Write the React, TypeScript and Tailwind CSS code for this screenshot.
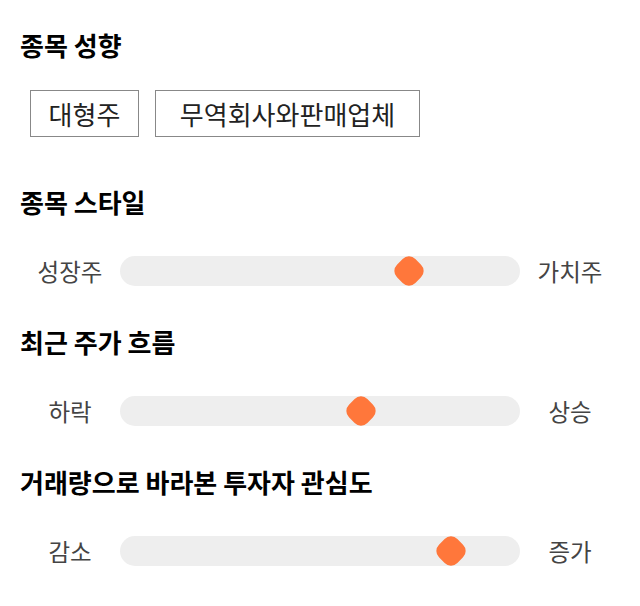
import React from 'react';

interface SliderProps {
  left: string;
  right: string;
  value: number;
}

const traits = [
  { label: '대형주', width: 'w-[109px]' },
  { label: '무역회사와판매업체', width: 'w-[265px]' },
];

const sliders: { title: string; left: string; right: string; value: number }[] = [
  { title: '종목 스타일', left: '성장주', right: '가치주', value: 72.25 },
  { title: '최근 주가 흐름', left: '하락', right: '상승', value: 60.25 },
  { title: '거래량으로 바라본 투자자 관심도', left: '감소', right: '증가', value: 82.75 },
];

const Slider: React.FC<SliderProps> = ({ left, right, value }) => (
  <div className="flex items-center h-[30px] mt-[39px]">
    <span className="w-[100px] text-center text-[23.5px] text-[#444] leading-[30px]">{left}</span>
    <div className="relative flex-1 h-[30px] rounded-full bg-[#eeeeee]">
      {/* knob */}
      <div
        className="absolute top-1/2 -translate-x-1/2 -translate-y-1/2"
        style={{ left: `${value}%` }}
      >
        <div className="w-[26px] h-[26px] rotate-45 rounded-[9px] bg-[#ff773b]" />
      </div>
    </div>
    <span className="w-[100px] text-center text-[23.5px] text-[#444] leading-[30px]">{right}</span>
  </div>
);

export default function App() {
  return (
    <div
      className="w-[640px] h-[606px] bg-white px-5 pt-[30px]"
      style={{ fontFamily: '"Noto Sans CJK KR", "Noto Sans", sans-serif' }}
    >
      <h2 className="h-[30px] leading-[30px] text-[26px] font-bold text-black">종목 성향</h2>
      <div className="flex gap-4 ml-[10px] mt-[30px]">
        {traits.map((t) => (
          <div
            key={t.label}
            className={`${t.width} h-[47px] flex items-center justify-center border border-[#888] text-[26px] text-[#222]`}
          >
            {t.label}
          </div>
        ))}
      </div>

      {sliders.map((s, i) => (
        <section key={s.title} className={i === 0 ? 'mt-[50px]' : 'mt-[41px]'}>
          <h2 className="h-[30px] leading-[30px] text-[26px] font-bold text-black">{s.title}</h2>
          <Slider left={s.left} right={s.right} value={s.value} />
        </section>
      ))}
    </div>
  );
}
